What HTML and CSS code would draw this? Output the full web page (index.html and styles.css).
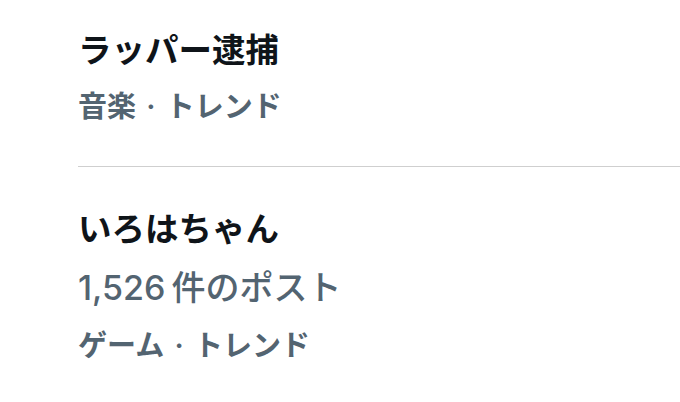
FILE: index.html
```html
<!DOCTYPE html>
<html lang="ja">
<head>
    <meta charset="UTF-8">
    <meta name="viewport" content="width=device-width, initial-scale=1.0">
    <title>トレンド</title>
    <link rel="stylesheet" href="styles.css">
</head>
<body>
    <div class="trends">
        <div class="trend">
            <div class="trend-name">ラッパー逮捕</div>
            <div class="trend-meta">音楽 · トレンド</div>
        </div>
        <div class="trend">
            <div class="trend-name">いろはちゃん</div>
            <div class="trend-count">1,526 件のポスト</div>
            <div class="trend-meta">ゲーム · トレンド</div>
        </div>
    </div>
</body>
</html>
```

FILE: styles.css
```css
/* Reset básico */
body {
    margin: 0;
    background-color: #fff;
    font-family: "Inter", "Noto Sans CJK JP", sans-serif;
}

.trends {
    padding-left: 78px;
}

.trend {
    display: flex;
    flex-direction: column;
    gap: 17px;
    padding: 40px 0;
    border-bottom: 1px solid #cfcfcf;
}

.trend:first-child {
    padding-top: 28px;
    padding-bottom: 42px;
}

.trend:last-child {
    border-bottom: none;
}

.trend-name {
    font-size: 33.5px;
    line-height: 44px;
    font-weight: 700;
    color: #0f1419;
}

.trend-count {
    margin-top: -2px;
    margin-bottom: 1px;
    font-size: 34px;
    line-height: 44px;
    font-weight: 500;
    word-spacing: -3px;
    color: #536471;
}

.trend-meta {
    font-size: 29px;
    line-height: 35px;
    font-weight: 600;
    word-spacing: 3px;
    color: #536471;
}
```
